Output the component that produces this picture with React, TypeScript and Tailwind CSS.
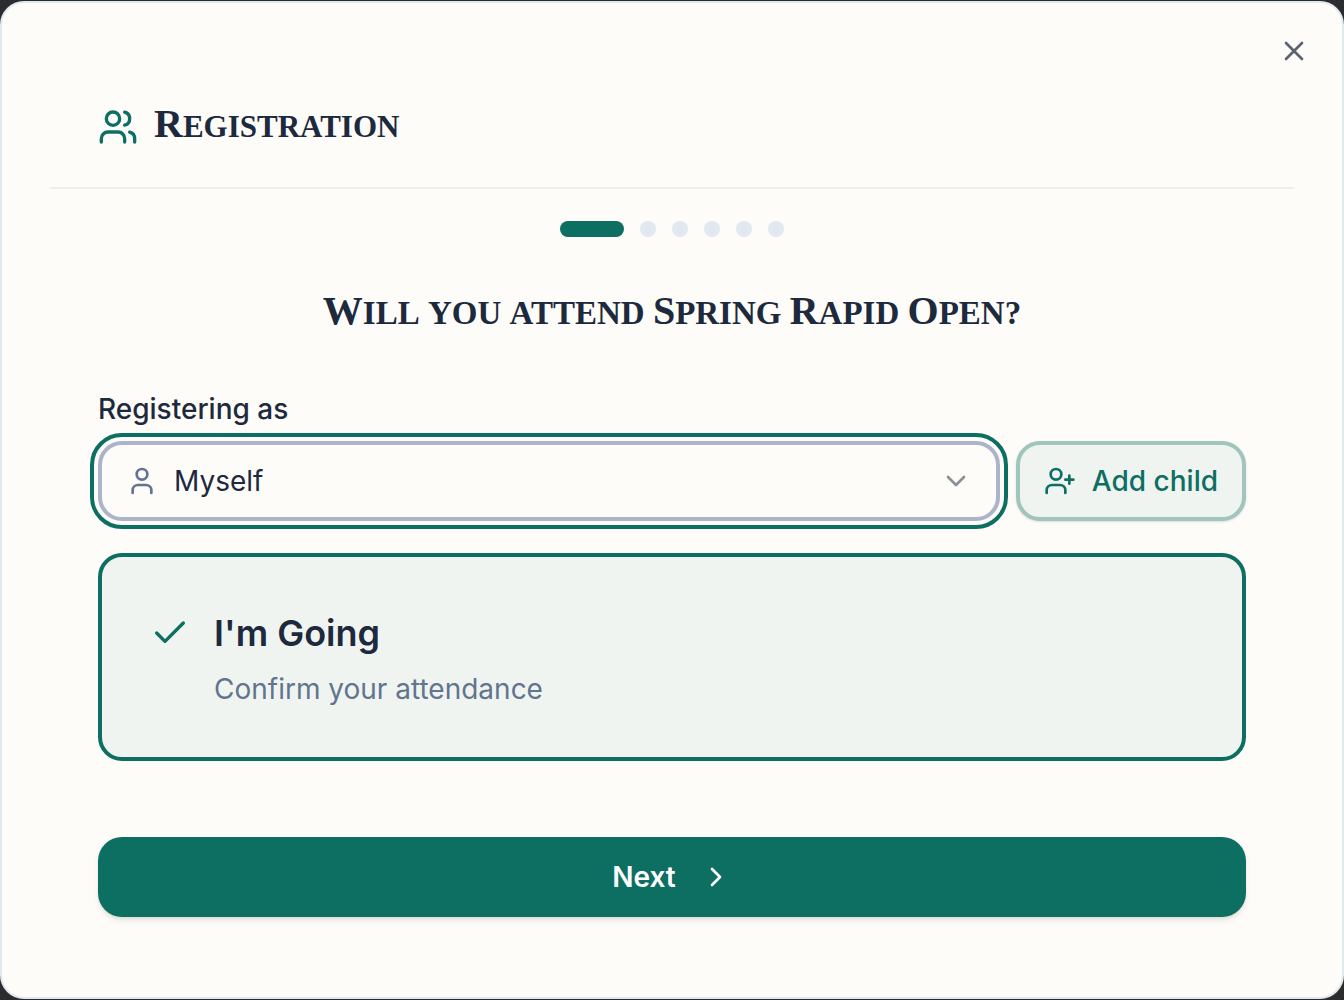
import { useState } from "react";
import { Check, ChevronDown, ChevronRight, User, UserPlus, Users, X } from "lucide-react";

const STEPS = ["attendance", "section", "byes", "contact", "payment", "review"];

interface DisplayWordsProps {
  text: string;
}

// Titles are set as capitals with a larger initial on each capitalised word
function DisplayWords({ text }: DisplayWordsProps) {
  return (
    <>
      {text.split(" ").map((word, i) => (
        <span key={word}>
          {i > 0 && " "}
          <span
            className={
              /^[A-Z]/.test(word)
                ? "inline-block uppercase first-letter:text-[40px] first-letter:leading-none"
                : "inline-block uppercase"
            }
          >
            {word}
          </span>
        </span>
      ))}
    </>
  );
}

function StepDots({ current }: { current: number }) {
  return (
    <div className="mt-8 flex justify-center gap-4">
      {STEPS.map((step, i) => (
        <span
          key={step}
          className={
            i === current
              ? "h-4 w-16 rounded-full bg-[#0d6e62]"
              : "size-4 rounded-full bg-slate-200"
          }
        />
      ))}
    </div>
  );
}

export default function App() {
  const [going, setGoing] = useState(true);

  return (
    <div className="min-h-screen bg-[#2b2c2e] py-px font-['Inter',sans-serif] text-slate-800">
      <main className="relative rounded-[24px] border-2 border-slate-200 bg-[#fdfcf9] px-12 pt-12 pb-20">
        <button
          type="button"
          aria-label="Close"
          className="absolute top-8 right-8 text-[#5b636e]"
        >
          <X className="size-8" />
        </button>

        <header className="flex items-center gap-4 border-b-2 border-[#eceff1] px-12 pt-12 pb-8">
          <Users className="size-10 text-[#0d6e62]" />
          <h1 className="font-['Liberation_Serif',serif] text-[31px] leading-[56px] font-bold">
            <DisplayWords text="Registration" />
          </h1>
        </header>

        <StepDots current={0} />

        <div className="px-12">
          <h2 className="mt-12 text-center font-['Liberation_Serif',serif] text-[33px] leading-[56px] font-bold">
            <DisplayWords text="Will you attend Spring Rapid Open?" />
          </h2>

          <label
            htmlFor="registrant"
            className="mt-12 block text-[28px] leading-10 font-medium"
          >
            Registering as
          </label>
          <div className="mt-3 flex gap-4">
            <div className="relative min-w-0 flex-1">
              <select
                id="registrant"
                className="h-20 w-full appearance-none rounded-[24px] border-4 border-[#abb4c9] bg-[#fdfcf9] pr-16 pl-18 text-[28px] outline-4 outline-offset-4 outline-[#0d6e62]"
              >
                <option>Myself</option>
              </select>
              <User className="pointer-events-none absolute top-6 left-7 size-8 text-slate-500" />
              <ChevronDown className="pointer-events-none absolute top-6 right-7 size-8 text-[#8b8f96]" />
            </div>
            <button
              type="button"
              className="flex h-20 items-center gap-4 rounded-[24px] border-4 border-[#9fc5bd] bg-[#eff4f0] px-6 text-[28px] font-medium text-[#0d6e62] shadow-sm"
            >
              <UserPlus className="size-8" />
              Add child
            </button>
          </div>

          <button
            type="button"
            aria-pressed={going}
            onClick={() => setGoing(!going)}
            className="mt-8 flex w-full items-start gap-6 rounded-[24px] border-4 border-[#0d6e62] bg-[#eff4f0] p-12 text-left"
          >
            <Check className="my-2 size-10 text-[#0d6e62]" />
            <span>
              <span className="block text-[36px] leading-[56px] font-semibold">I'm Going</span>
              <span className="mt-2 block text-[28px] leading-10 text-slate-500">
                Confirm your attendance
              </span>
            </span>
          </button>

          <button
            type="button"
            className="mt-19 flex h-20 w-full items-center justify-center gap-6 rounded-[24px] bg-[#0d6e62] text-[28px] font-semibold text-white shadow-md"
          >
            Next
            <ChevronRight className="size-8" />
          </button>
        </div>
      </main>
    </div>
  );
}
